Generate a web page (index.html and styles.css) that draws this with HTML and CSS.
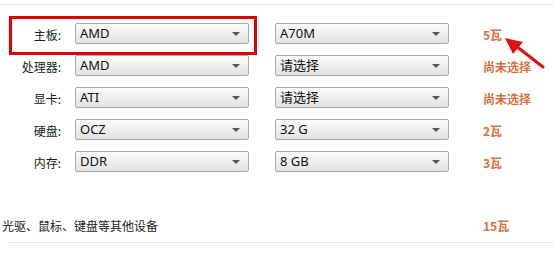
FILE: index.html
```html
<!DOCTYPE html>
<html lang="zh-CN">
<head>
<meta charset="utf-8">
<link rel="stylesheet" href="styles.css">
</head>
<body>
<div class="page">
  <div class="topline"></div>
  <div class="rows">
    <div class="row">
      <span class="lbl">主板:</span>
      <div class="sel sel-a">AMD</div>
      <div class="sel sel-b">A70M</div>
      <span class="val">5瓦</span>
    </div>
    <div class="row">
      <span class="lbl">处理器:</span>
      <div class="sel sel-a">AMD</div>
      <div class="sel sel-b">请选择</div>
      <span class="val">尚未选择</span>
    </div>
    <div class="row">
      <span class="lbl">显卡:</span>
      <div class="sel sel-a">ATI</div>
      <div class="sel sel-b">请选择</div>
      <span class="val">尚未选择</span>
    </div>
    <div class="row">
      <span class="lbl">硬盘:</span>
      <div class="sel sel-a">OCZ</div>
      <div class="sel sel-b">32 G</div>
      <span class="val">2瓦</span>
    </div>
    <div class="row">
      <span class="lbl">内存:</span>
      <div class="sel sel-a">DDR</div>
      <div class="sel sel-b">8 GB</div>
      <span class="val">3瓦</span>
    </div>
  </div>
  <div class="other">
    <span class="other-txt">光驱、鼠标、键盘等其他设备</span>
    <span class="val">15瓦</span>
  </div>
  <div class="bottomline"></div>

  <div class="hl-box"></div>
  <svg class="arrow" width="60" height="45" viewBox="0 0 60 45">
    <line x1="41" y1="32" x2="14" y2="11" stroke="#e01010" stroke-width="3" stroke-linecap="round"/>
    <polygon points="3,3 21,7 11,19" fill="#e01010"/>
  </svg>
</div>
</body>
</html>
```
FILE: styles.css
```css
html, body {
  margin: 0;
  padding: 0;
  background: #fff;
}
.page {
  position: relative;
  width: 553px;
  height: 270px;
  font-family: "Noto Sans", "Noto Sans CJK SC", sans-serif;
  font-size: 12px;
  color: #222;
}
.topline {
  margin-top: 4px;
  height: 1px;
  background: #e6e6e6;
}
.rows {
  display: flex;
  flex-direction: column;
  gap: 11px;
  padding-top: 18px;
}
.row {
  display: flex;
  align-items: center;
  height: 21px;
}
.lbl {
  width: 61px;
  text-align: right;
  font-family: "Noto Sans CJK SC", sans-serif;
  font-size: 12px;
  color: #222;
  margin-top: 2px;
}
.sel {
  position: relative;
  box-sizing: border-box;
  width: 174px;
  height: 21px;
  border: 1px solid #a8a8a8;
  border-radius: 2px;
  background: linear-gradient(#fbfbfb, #e2e2e2);
  padding-left: 4px;
  line-height: 19px;
  font-family: "Noto Sans", "Noto Sans CJK SC", sans-serif;
  font-size: 13px;
  color: #111;
}
.sel::after {
  content: "";
  position: absolute;
  right: 8px;
  top: 8px;
  border-left: 4px solid transparent;
  border-right: 4px solid transparent;
  border-top: 4px solid #555;
}
.sel-a {
  margin-left: 14px;
}
.sel-b {
  margin-left: 26px;
}
.val {
  margin-left: 34px;
  font-family: "Noto Sans CJK SC", sans-serif;
  font-weight: bold;
  font-size: 12px;
  color: #d8703e;
  margin-top: 1px;
}
.other {
  display: flex;
  align-items: center;
  height: 20px;
  margin-top: 43px;
}
.other-txt {
  width: 447px;
  padding-left: 2px;
  font-family: "Noto Sans CJK SC", sans-serif;
  font-size: 12px;
  color: #222;
}
.bottomline {
  margin-top: 7px;
  margin-left: 8px;
  height: 1px;
  background: #e6e6e6;
}
.hl-box {
  position: absolute;
  left: 9px;
  top: 12px;
  width: 242px;
  height: 33px;
  border: 3px solid #e00000;
}
.arrow {
  position: absolute;
  left: 502px;
  top: 31px;
}
```
